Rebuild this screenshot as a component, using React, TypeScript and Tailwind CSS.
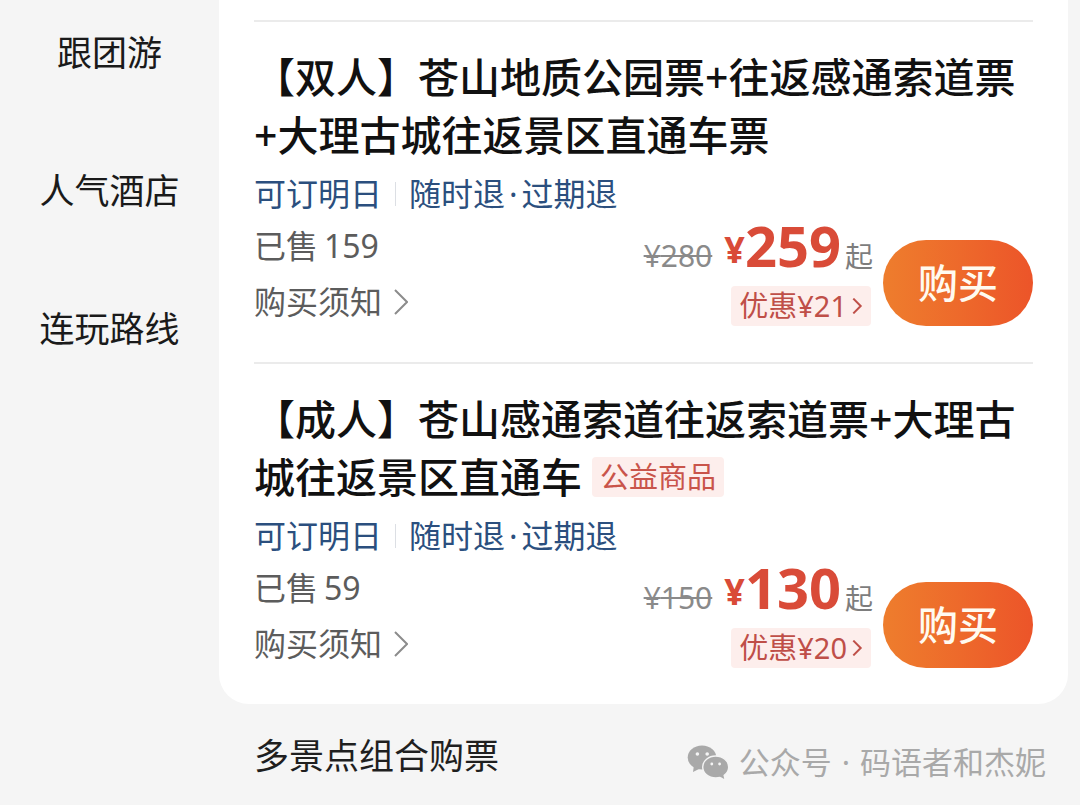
type Ticket = {
  title: string;
  tag?: string;
  sold: number;
  original: number;
  price: number;
  discount: number;
};

const categories = ["跟团游", "人气酒店", "连玩路线"];

const tickets: Ticket[] = [
  {
    title: "【双人】苍山地质公园票+往返感通索道票+大理古城往返景区直通车票",
    sold: 159,
    original: 280,
    price: 259,
    discount: 21,
  },
  {
    title: "【成人】苍山感通索道往返索道票+大理古城往返景区直通车",
    tag: "公益商品",
    sold: 59,
    original: 150,
    price: 130,
    discount: 20,
  },
];

function Chevron({ className }: { className: string }) {
  return (
    <svg viewBox="0 0 14 26" className={className} fill="none" stroke="currentColor" aria-hidden="true">
      <path d="M1 1 L13 13 L1 25" strokeWidth="2" vectorEffect="non-scaling-stroke" />
    </svg>
  );
}

function ChatBubbles() {
  return (
    <svg viewBox="0 0 42 36" className="h-9 w-[42px]" fill="currentColor" aria-hidden="true">
      <ellipse cx="15" cy="13.5" rx="14.3" ry="12" />
      <path d="M7 21 L6 28 L13 24.5 Z" />
      <circle cx="10.4" cy="10" r="1.8" fill="#f5f5f5" />
      <circle cx="20.2" cy="10" r="1.8" fill="#f5f5f5" />
      <ellipse cx="28.7" cy="23" rx="13" ry="11" stroke="#f5f5f5" strokeWidth="1.4" />
      <path d="M31 31.5 L37.2 35 L36 29 Z" />
      <circle cx="24.8" cy="20" r="1.4" fill="#f5f5f5" />
      <circle cx="32.6" cy="20" r="1.4" fill="#f5f5f5" />
    </svg>
  );
}

function TicketItem({ ticket }: { ticket: Ticket }) {
  return (
    <article className="border-t-2 border-[#ebebeb] pt-[26px] pb-[26px]">
      <div className="text-[41px] leading-[58px] text-[#111]">
        <h2 className="inline font-medium">{ticket.title}</h2>
        {ticket.tag && (
          <span className="ml-[10px] inline-flex h-[58px] items-center align-top">
            <span className="rounded bg-[#fdeeec] px-2 text-[29px] leading-10 text-[#c9544a]">{ticket.tag}</span>
          </span>
        )}
      </div>
      <div className="flex h-[60px] items-center text-[32px] text-[#2b4f7e]">
        <span>可订明日</span>
        <span className="mx-[13px] h-6 w-px bg-[#dcdfe4]" />
        <span>随时退</span>
        <span className="mx-1">·</span>
        <span>过期退</span>
      </div>
      <div className="flex items-end justify-between">
        <div className="text-[#5c5c5c]">
          <p className="flex items-baseline gap-[6px] text-[32px] leading-[44px]">
            已售<span>{ticket.sold}</span>
          </p>
          <a href="#notice" className="flex h-[68px] items-center gap-3 text-[32px]">
            购买须知
            <Chevron className="h-[26px] w-[14px] text-[#8c8c8c]" />
          </a>
        </div>
        <div className="flex items-end gap-[10px] pb-[10px]">
          <div className="flex flex-col items-end gap-[14px]">
            <div className="flex h-12 items-baseline leading-[42px]">
              <del className="mr-3 text-[30px] text-[#8a8a8a] decoration-2">¥{ticket.original}</del>
              <span className="text-[56px] font-bold text-[#d94b38]">
                <span className="align-[4px] text-[36px] leading-none">¥</span>
                {ticket.price}
              </span>
              <span className="ml-1 text-[28px] text-[#7d7d7d]">起</span>
            </div>
            <a
              href="#discount"
              className="mr-[2px] flex h-10 items-center gap-1 rounded bg-[#fdeeec] px-2 text-[29px] text-[#bf4f48]"
            >
              优惠¥{ticket.discount}
              <Chevron className="h-4 w-3" />
            </a>
          </div>
          <button
            type="button"
            className="h-[86px] w-[150px] rounded-full bg-linear-to-r from-[#ee7d2d] to-[#ec5429] text-[40px] font-medium text-[#fffaf0]"
          >
            购买
          </button>
        </div>
      </div>
    </article>
  );
}

export default function App() {
  return (
    <div className="flex min-h-screen bg-[#f5f5f5] font-['Noto_Sans','Noto_Sans_CJK_SC',sans-serif]">
      <nav className="w-[219px] shrink-0 pt-[29px]">
        <ul className="flex flex-col gap-[90px] text-center text-[35px] leading-[48px] text-[#1a1a1a]">
          {categories.map((name) => (
            <li key={name}>
              <a href="#category">{name}</a>
            </li>
          ))}
        </ul>
      </nav>
      <main className="flex-1 pr-3">
        <section className="rounded-b-[30px] bg-white px-[35px] pt-5">
          {tickets.map((ticket) => (
            <TicketItem key={ticket.title} ticket={ticket} />
          ))}
        </section>
        <div className="flex items-start justify-between pt-7 pr-[22px] pl-[35px] leading-[48px]">
          <h2 className="text-[35px] text-[#1f1f1f]">多景点组合购票</h2>
          <p className="mt-[6px] flex items-center gap-[10px] text-[31px] text-[#a9a9a9]">
            <ChatBubbles />
            <span>公众号</span>
            <span>·</span>
            <span>码语者和杰妮</span>
          </p>
        </div>
      </main>
    </div>
  );
}
